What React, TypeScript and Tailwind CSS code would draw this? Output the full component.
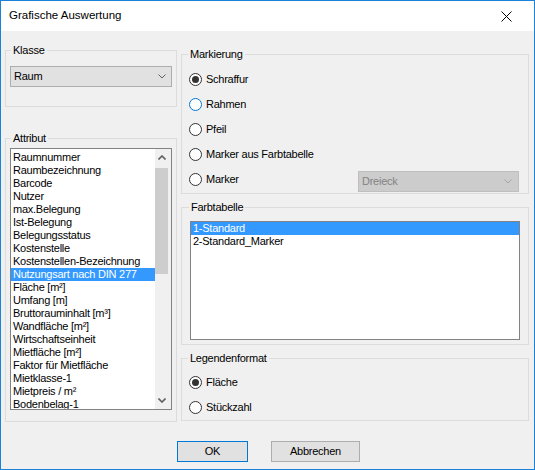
import type { ReactNode } from 'react'

const ATTRIBUTES = [
  'Raumnummer',
  'Raumbezeichnung',
  'Barcode',
  'Nutzer',
  'max.Belegung',
  'Ist-Belegung',
  'Belegungsstatus',
  'Kostenstelle',
  'Kostenstellen-Bezeichnung',
  'Nutzungsart nach DIN 277',
  'Fläche [m²]',
  'Umfang [m]',
  'Bruttorauminhalt [m³]',
  'Wandfläche [m²]',
  'Wirtschaftseinheit',
  'Mietfläche [m²]',
  'Faktor für Mietfläche',
  'Mietklasse-1',
  'Mietpreis / m²',
  'Bodenbelag-1',
]

const SELECTED_ATTRIBUTE = 'Nutzungsart nach DIN 277'

function Chevron({ up = false, color = '#606060', width = 1 }: { up?: boolean; color?: string; width?: number }) {
  return (
    <svg width="8" height="5" viewBox="0 0 8 5" className="shrink-0">
      <path
        d={up ? 'M0.5 4.5 L4 1 L7.5 4.5' : 'M0.5 0.5 L4 4 L7.5 0.5'}
        fill="none"
        stroke={color}
        strokeWidth={width}
      />
    </svg>
  )
}

function GroupBox({ label, className, children }: { label: string; className: string; children: ReactNode }) {
  return (
    <div className={`border border-[#dcdcdc] ${className}`}>
      {/* caption sits on the top border line */}
      <span className="-mt-[7px] block w-fit bg-[#f0f0f0] px-[2px] leading-[13px]">{label}</span>
      {children}
    </div>
  )
}

function Radio({ label, checked = false, focused = false }: { label: string; checked?: boolean; focused?: boolean }) {
  return (
    <div className="flex h-[25px] items-center gap-[4px]">
      <span
        className={`flex h-[13px] w-[13px] shrink-0 items-center justify-center rounded-full border bg-white ${
          focused ? 'border-[#0078d7]' : 'border-[#333333]'
        }`}
      >
        {checked && <span className="h-[7px] w-[7px] rounded-full bg-[#333333]" />}
      </span>
      <span className="leading-[13px]">{label}</span>
    </div>
  )
}

export default function App() {
  return (
    <div className="flex h-[470px] w-[535px] flex-col border border-[#1a82d9] bg-[#f0f0f0] font-['Liberation_Sans',Arial,sans-serif] text-[11px] tracking-[-0.25px] text-black">
      {/* title bar */}
      <div className="flex h-[30px] shrink-0 items-center justify-between bg-white pl-[8px]">
        <span className="text-[11.5px] tracking-normal">Grafische Auswertung</span>
        <svg width="11" height="11" viewBox="0 0 11 11" className="mr-[22px]">
          <path d="M0.5 0.5 L10.5 10.5 M10.5 0.5 L0.5 10.5" stroke="#000" strokeWidth="1" />
        </svg>
      </div>

      <div className="flex flex-1 flex-col pl-[4px]">
        <div className="flex gap-[4px]">
          {/* left column */}
          <div className="flex w-[172px] flex-col pt-[19px]">
            <GroupBox label="Klasse" className="pl-[4px] pr-[4px] pb-[19px] [&>span]:ml-[1px]">
              <div className="mt-[9px] flex h-[21px] items-center justify-between border border-[#adadad] bg-[#e1e1e1] pl-[3px] pr-[5px]">
                <span>Raum</span>
                <Chevron />
              </div>
            </GroupBox>

            <GroupBox label="Attribut" className="mt-[31px] pl-[4px] pr-[4px] pb-[11px] [&>span]:ml-[1px]">
              <div className="mt-[3px] flex h-[262px] overflow-hidden border border-[#828282] bg-white">
                <div className="flex-1 overflow-hidden pt-[2px]">
                  {ATTRIBUTES.map((item) => (
                    <div
                      key={item}
                      className={`h-[13px] whitespace-nowrap pl-[2px] leading-[13px] ${
                        item === SELECTED_ATTRIBUTE ? 'bg-[#3399ff] text-white' : ''
                      }`}
                    >
                      {item}
                    </div>
                  ))}
                </div>
                {/* scrollbar */}
                <div className="flex w-[16px] shrink-0 flex-col bg-[#f0f0f0]">
                  <div className="flex h-[17px] items-center justify-center pr-[3px]">
                    <Chevron up width={1.6} />
                  </div>
                  <div className="flex-1">
                    <div className="mt-[2px] h-[106px] w-[13px] bg-[#cdcdcd]" />
                  </div>
                  <div className="flex h-[17px] items-center justify-center pr-[3px]">
                    <Chevron width={1.6} />
                  </div>
                </div>
              </div>
            </GroupBox>
          </div>

          {/* right column */}
          <div className="flex w-[348px] flex-col pt-[23px]">
            <GroupBox label="Markierung" className="pl-[7px] pr-[9px] pb-[1px] [&>span]:-ml-[1px]">
              <div className="mt-[6px] flex flex-col">
                <Radio label="Schraffur" checked />
                <Radio label="Rahmen" focused />
                <Radio label="Pfeil" />
                <Radio label="Marker aus Farbtabelle" />
                <div className="flex h-[25px] items-center justify-between">
                  <Radio label="Marker" />
                  <div className="flex h-[21px] w-[161px] items-center justify-between self-end border border-[#bfbfbf] bg-[#cccccc] pl-[3px] pr-[6px] text-[#838383]">
                    <span>Dreieck</span>
                    <Chevron color="#a6a6a6" />
                  </div>
                </div>
              </div>
            </GroupBox>

            <GroupBox label="Farbtabelle" className="mt-[13px] pl-[8px] pr-[8px] pb-[4px] [&>span]:-ml-[1px]">
              <div className="mt-[7px] h-[119px] border border-[#828282] bg-white">
                <div className="h-[13px] bg-[#3399ff] pl-[2px] leading-[13px] text-white">1-Standard</div>
                <div className="h-[13px] pl-[2px] leading-[13px]">2-Standard_Marker</div>
              </div>
            </GroupBox>

            <GroupBox label="Legendenformat" className="mt-[13px] pl-[7px] pr-[9px] [&>span]:-ml-[1px]">
              <div className="mt-[5px] flex flex-col">
                <Radio label="Fläche" checked />
                <Radio label="Stückzahl" />
              </div>
            </GroupBox>
          </div>
        </div>

        {/* buttons */}
        <div className="mt-[19px] flex gap-[23px] pl-[172px]">
          <button
            type="button"
            className="h-[21px] w-[71px] border border-[#0078d7] bg-[#e1e1e1] leading-[13px] tracking-[-0.25px]"
          >
            OK
          </button>
          <button
            type="button"
            className="h-[21px] w-[89px] border border-[#adadad] bg-[#e1e1e1] leading-[13px] tracking-[-0.25px]"
          >
            Abbrechen
          </button>
        </div>
      </div>
    </div>
  )
}
